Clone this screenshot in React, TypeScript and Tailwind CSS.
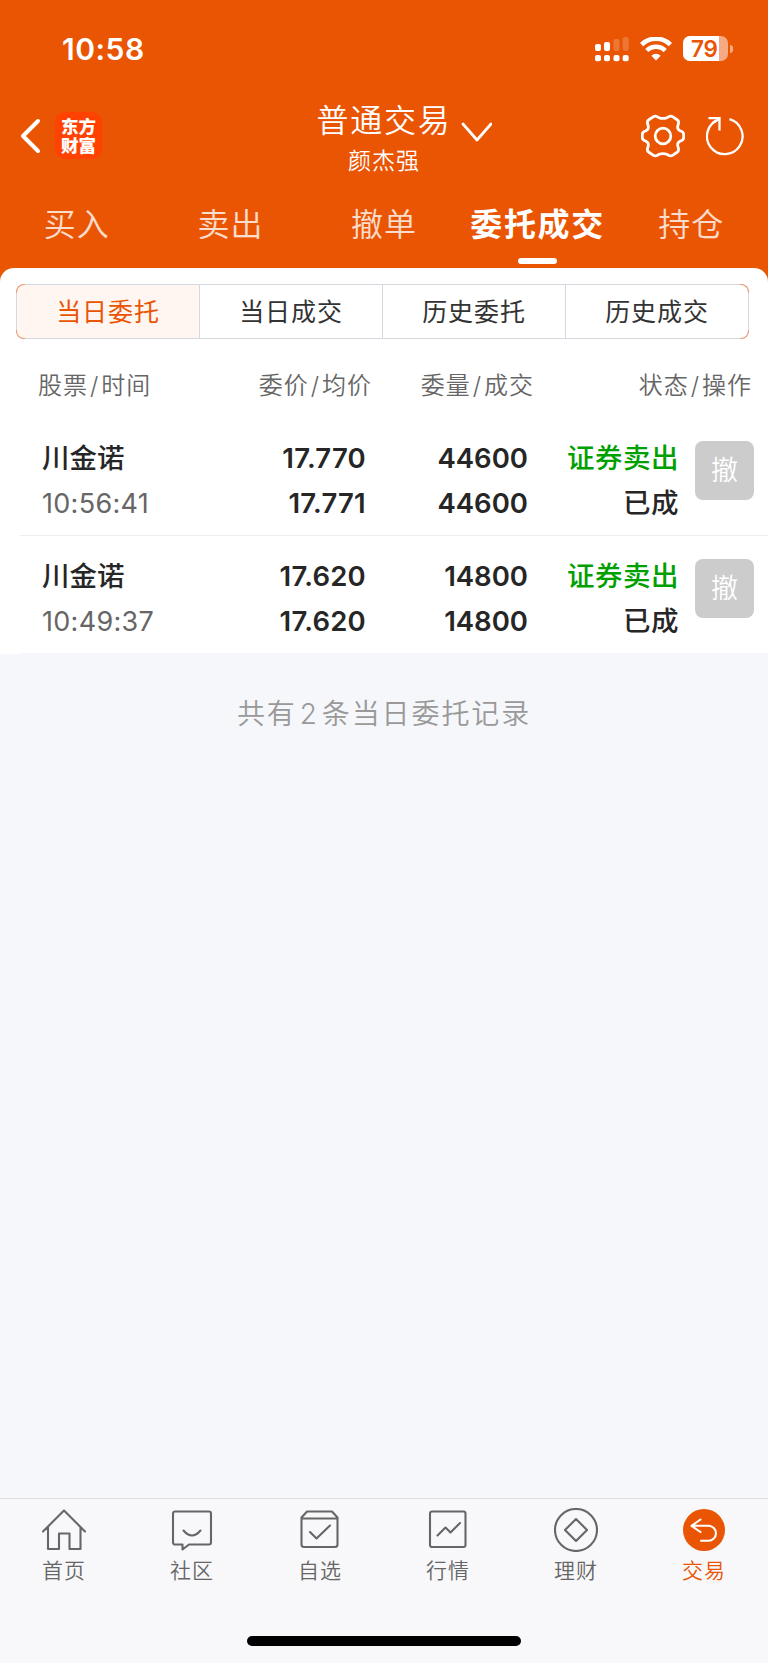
import React from 'react';

const tabs = ['买入', '卖出', '撤单', '委托成交', '持仓'];
const segments = ['当日委托', '当日成交', '历史委托', '历史成交'];
const orders = [
  { name: '川金诺', time: '10:56:41', price: '17.770', avg: '17.771', qty: '44600', filled: '44600' },
  { name: '川金诺', time: '10:49:37', price: '17.620', avg: '17.620', qty: '14800', filled: '14800' },
];

function StatusBar() {
  return (
    <div className="flex h-[98px] items-center justify-between pl-[62px] pr-[36px] text-white">
      <span className="text-[30px] font-semibold leading-[98px] tracking-[0.5px]">10:58</span>
      <div className="flex items-center">
        <svg width="34" height="26" viewBox="0 0 34 26" fill="#fff" className="mr-[11px]">
          <rect x="0" y="8" width="6" height="7" rx="2" />
          <rect x="9" y="6" width="6" height="9" rx="2" />
          <rect x="18.5" y="3" width="6" height="12" rx="2" opacity=".2" />
          <rect x="27.7" y="1" width="6" height="14" rx="2" opacity=".2" />
          <rect x="0" y="19" width="6" height="6.3" rx="2" />
          <rect x="9" y="19" width="6" height="6.3" rx="2" />
          <rect x="18.5" y="19" width="6" height="6.3" rx="2" />
          <rect x="27.7" y="19" width="6" height="6.3" rx="2" />
        </svg>
        <svg width="32" height="24" viewBox="0 0 32 24" fill="none" stroke="#fff" strokeWidth="4.6" className="mr-[11px]">
          <path d="M1.600 7.600a20.500 20.500 0 0 1 28.800 0" />
          <path d="M6.800 13.500a13 13 0 0 1 18.400 0" />
          <path d="M16 23.400l-4.600-4.700a6.600 6.600 0 0 1 9.200 0z" fill="#fff" stroke="none" />
        </svg>
        <div className="-mr-px flex items-center">
          <div className="relative -mt-px flex h-[25px] w-[45px] overflow-hidden rounded-[7px] bg-white/50">
            <div className="h-full w-[36px] bg-white" />
            <span className="absolute left-[8px] top-0 text-[22.500px] font-semibold leading-[25px] tracking-[-0.200px] text-[#ea5504]">79</span>
          </div>
          <div className="ml-[2px] h-[8px] w-[3px] rounded-r-full bg-white/50" />
        </div>
      </div>
    </div>
  );
}

function TitleBar() {
  return (
    <div className="grid h-[84px] grid-cols-[1fr_auto_1fr] text-white">
      <div className="flex items-start pl-[20px] pt-[14px]">
        <svg width="22" height="36" viewBox="0 0 22 36" fill="none" stroke="#fff" strokeWidth="4" strokeLinecap="round" strokeLinejoin="round" className="mt-[6px]">
          <path d="M18 3L3 18L18 33" />
        </svg>
        <div className="ml-[13px] flex h-[47px] w-[47px] flex-col items-center justify-center rounded-[10px] bg-[#ff4200] text-[17.500px] font-black leading-[19px]">
          <span>东方</span>
          <span>财富</span>
        </div>
      </div>
      <div className="flex w-[140px] flex-col items-center">
        <span className="whitespace-nowrap text-[32px] font-[350] leading-[45px] tracking-[1.800px]">普通交易</span>
        <span className="text-[23px] font-[350] leading-[37px] tracking-[1px]">颜杰强</span>
      </div>
      <div className="flex items-start justify-between pl-[6px] pr-[24px]">
        <svg width="32" height="22" viewBox="0 0 32 22" fill="none" stroke="#fff" strokeWidth="2.700" strokeLinecap="round" strokeLinejoin="round" className="mt-[23px]">
          <path d="M3 3L17 19L31 3" />
        </svg>
        <div className="flex items-center gap-[21px] pt-[16px]">
          <svg width="44" height="44" viewBox="-22 -22 44 44" fill="none" stroke="#fff" strokeWidth="2.800" strokeLinejoin="round">
            <path d="M-4.500 -18.600Q0 -16.500 4.500 -18.600Q7.500 -20.700 9.500 -19.300L13.800 -16.500Q16.500 -14.800 15.300 -11.800Q13.300 -6.500 17.500 -5Q20.700 -4.200 20.700 -1.500V1.500Q20.700 4.200 17.500 5Q13.300 6.500 15.300 11.800Q16.500 14.800 13.800 16.500L9.500 19.300Q7.500 20.700 4.500 18.600Q0 16.500 -4.500 18.600Q-7.500 20.700 -9.500 19.300L-13.800 16.500Q-16.500 14.800 -15.300 11.800Q-13.300 6.500 -17.500 5Q-20.700 4.200 -20.700 1.500V-1.500Q-20.700 -4.200 -17.500 -5Q-13.300 -6.500 -15.300 -11.800Q-16.500 -14.800 -13.800 -16.500L-9.500 -19.300Q-7.500 -20.700 -4.500 -18.600Z" />
            <circle r="7.800" />
          </svg>
          <svg width="38" height="40" viewBox="0 0 38 40" fill="none" stroke="#fff" strokeWidth="2.300">
            <path d="M23.500 3.200A17.800 17.800 0 1 1 12.500 3.700" />
            <path d="M2.500 2.200H13.500V14.500M13.500 2.200L8 6.500" />
          </svg>
        </div>
      </div>
    </div>
  );
}

function Tabs() {
  return (
    <div className="grid h-[86px] grid-cols-5">
      {tabs.map((t) =>
        t === '委托成交' ? (
          <div key={t} className="flex flex-col items-center">
            <span className="whitespace-nowrap text-[32px] font-bold leading-[86px] tracking-[1.700px] text-white">{t}</span>
            <div className="-mt-[10px] h-[6px] w-[39px] rounded-full bg-white" />
          </div>
        ) : (
          <span key={t} className="text-center text-[32px] font-[350] leading-[86px] tracking-[1px] text-white/80">{t}</span>
        ),
      )}
    </div>
  );
}

function Segments() {
  return (
    <div className="relative ml-[16px] mr-[19px]">
      <div className="grid h-[55px] grid-cols-[182px_183px_183px_1fr] overflow-hidden rounded-[8px] border border-[#d5d8de] text-center text-[25px] leading-[55px] tracking-[0.900px] text-[#333]">
        {segments.map((s, i) => (
          <div key={s} className={i === 0 ? 'bg-[#fff5f1] text-[#ea5504]' : 'border-l border-[#d5d8de]'}>
            {s}
          </div>
        ))}
      </div>
      <span className="absolute left-0 top-0 h-[9px] w-[9px] rounded-tl-[8px] border-l border-t border-[#ee9a70]" />
      <span className="absolute bottom-0 left-0 h-[9px] w-[9px] rounded-bl-[8px] border-b border-l border-[#ee9a70]" />
      <span className="absolute right-0 top-0 h-[9px] w-[9px] rounded-tr-[8px] border-r border-t border-[#ee9a70]" />
      <span className="absolute bottom-0 right-0 h-[9px] w-[9px] rounded-br-[8px] border-b border-r border-[#ee9a70]" />
    </div>
  );
}

function PairHeading({ first, second }: { first: string; second: string }) {
  return (
    <>
      {first}
      <span className="mx-[2px]">/</span>
      {second}
    </>
  );
}

function Orders() {
  return (
    <>
      <div className="grid h-[79px] grid-cols-[210px_162px_162px_1fr] text-right text-[24px] font-[350] leading-[93px] tracking-[1px] text-[#666]">
        <div className="pl-[38px] text-left"><PairHeading first="股票" second="时间" /></div>
        <div><PairHeading first="委价" second="均价" /></div>
        <div><PairHeading first="委量" second="成交" /></div>
        <div className="pr-[16px]"><PairHeading first="状态" second="操作" /></div>
      </div>
      {orders.map((o, i) => (
        <div key={o.time} className={i === 0 ? 'ml-[20px] flex h-[118px] border-b border-[#eeeff2]' : 'ml-[20px] flex h-[118px] border-b border-[#f6f7fa]'}>
          <div className="-ml-[20px] grid w-[768px] grid-cols-[210px_156px_162px_1fr] pt-[18px] text-right text-[27.500px] font-semibold leading-[45px] text-[#262626]">
            <div className="flex flex-col pl-[42px] text-left">
              <span className="font-medium">{o.name}</span>
              <span className="text-[27px] font-normal tracking-[0.300px] text-[#666]">{o.time}</span>
            </div>
            <div className="flex flex-col tracking-[0.250px]">
              <span>{o.price}</span>
              <span>{o.avg}</span>
            </div>
            <div className="flex flex-col">
              <span>{o.qty}</span>
              <span>{o.filled}</span>
            </div>
            <div className="flex justify-end pr-[14px]">
              <div className="flex flex-col font-medium tracking-[0.500px]">
                <span className="text-[#00a000]">证券卖出</span>
                <span>已成</span>
              </div>
              <div className="ml-[16px] mt-[5px] h-[59px] w-[59px] rounded-[8px] bg-[#ccc] text-center text-[27px] font-[350] leading-[60px] text-white">撤</div>
            </div>
          </div>
        </div>
      ))}
    </>
  );
}

const icons = [
  <path key="h" d="M1 23.500L22 2.500L43 23.500M6 19V41H17V25.500H27.500V41H38.500V19" />,
  <path key="c" d="M5 3.500H39a2 2 0 0 1 2 2V34.500a2 2 0 0 1 -2 2H19L12.500 41.500V36.500H5a2 2 0 0 1 -2 -2V5.500a2 2 0 0 1 2 -2ZM13.500 22.500Q22 32.500 30.500 22.500" />,
  <path key="s" d="M9 3.500H34L39.500 9.500V36.500a2.500 2.500 0 0 1 -2.500 2.500H6a2.500 2.500 0 0 1 -2.500 -2.500V9.500ZM3.500 10.500H39.500M12 24L18.500 30.500L32 17.500" />,
  <path key="q" d="M6 3.500H37.500a2 2 0 0 1 2 2V37a2 2 0 0 1 -2 2H6a2 2 0 0 1 -2 -2V5.500a2 2 0 0 1 2 -2ZM11.500 27.500L19.500 19.500L24.500 24.500L34 15" />,
  <path key="l" d="M22 1a21 21 0 1 1 0 42a21 21 0 1 1 0 -42ZM22 11L33 22L22 33L11 22Z" />,
  <g key="j">
    <circle cx="22" cy="22" r="21" fill="#ea5504" stroke="none" />
    <path d="M18.500 11.500L9.500 17.800L18.500 24M10 17.800H26.500a7.500 7.500 0 0 1 0 15H19" stroke="#fff" />
  </g>,
];
const navLabels = ['首页', '社区', '自选', '行情', '理财', '交易'];

function BottomNav() {
  return (
    <nav className="flex h-[165px] flex-col items-center justify-between border-t border-[#e0e0e3] bg-[#f8f8fb] pb-[17px]">
      <div className="grid w-full grid-cols-6 pt-[9px]">
        {navLabels.map((l, i) => (
          <div key={l} className="flex flex-col items-center">
            <svg width="44" height="44" viewBox="0 0 44 44" fill="none" stroke="#666" strokeWidth="2.100" strokeLinejoin="round" strokeLinecap="round">
              {icons[i]}
            </svg>
            <span className={i === 5 ? 'text-[21px] font-[350] leading-[38px] tracking-[1px] text-[#ea5504]' : 'text-[21px] font-[350] leading-[38px] tracking-[1px] text-[#666]'}>{l}</span>
          </div>
        ))}
      </div>
      <div className="h-[10px] w-[274px] rounded-full bg-black" />
    </nav>
  );
}

export default function App() {
  return (
    <div lang="zh-CN" className="flex h-[1663px] w-[768px] flex-col overflow-hidden bg-[#f6f7fa] font-['Inter','Noto_Sans_CJK_SC',sans-serif]">
      <div className="bg-[#ea5504]">
        <StatusBar />
        <TitleBar />
        <Tabs />
        <div className="rounded-t-[14px] bg-white pt-[16px]">
          <Segments />
        </div>
      </div>
      <div className="bg-white">
        <Orders />
      </div>
      <div className="flex-1 text-center text-[28px] font-[350] leading-[120px] tracking-[1.900px] text-[#999]">
        共有<span className="mx-[3px]">2</span>条当日委托记录
      </div>
      <BottomNav />
    </div>
  );
}
